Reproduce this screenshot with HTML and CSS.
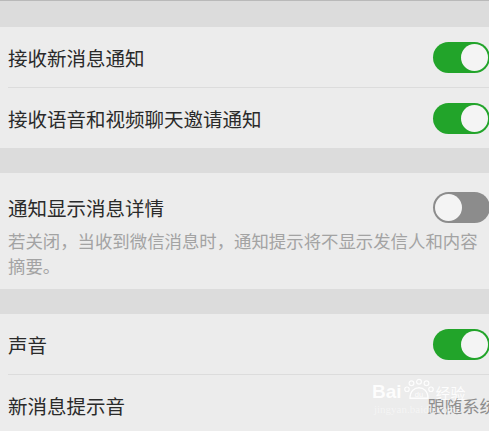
FILE: index.html
```html
<!DOCTYPE html>
<html lang="zh-CN">
<head>
  <meta charset="UTF-8" />
  <title>新消息通知</title>
  <link rel="stylesheet" href="styles.css">
</head>
<body>

<div class="band band-top"></div>

<div class="group">
  <div class="row">
    <span class="label">接收新消息通知</span>
    <span class="switch on"></span>
  </div>
  <div class="row">
    <span class="label">接收语音和视频聊天邀请通知</span>
    <span class="switch on"></span>
  </div>
</div>

<div class="band"></div>

<div class="group">
  <div class="row row-tall">
    <div class="row-head">
      <span class="label">通知显示消息详情</span>
      <span class="switch"></span>
    </div>
    <p class="hint">若关闭，当收到微信消息时，通知提示将不显示发信人和内容摘要。</p>
  </div>
</div>

<div class="band"></div>

<div class="group">
  <div class="row">
    <span class="label">声音</span>
    <span class="switch on"></span>
  </div>
  <div class="row">
    <span class="label">新消息提示音</span>
    <span class="value">跟随系统</span>
  </div>
</div>

<!-- watermark over the last row -->
<div class="watermark">
  <div class="wm-top">
    <span class="wm-bai">Bai</span>
    <svg class="wm-paw" viewBox="0 0 40 30">
      <circle cx="10" cy="6" r="3.2" fill="none" stroke="white" stroke-width="1.6"/>
      <circle cx="20" cy="4" r="3.2" fill="none" stroke="white" stroke-width="1.6"/>
      <circle cx="30" cy="6" r="3.2" fill="none" stroke="white" stroke-width="1.6"/>
      <circle cx="4" cy="14" r="3" fill="none" stroke="white" stroke-width="1.6"/>
      <circle cx="36" cy="14" r="3" fill="none" stroke="white" stroke-width="1.6"/>
      <path d="M8 26 C8 16 14 12 20 12 C26 12 32 16 32 26 Z" fill="none" stroke="white" stroke-width="1.8"/>
      <text x="20" y="24" text-anchor="middle" font-size="10" fill="white" font-family="Liberation Sans, sans-serif">du</text>
    </svg>
    <span class="wm-jy">经验</span>
  </div>
  <div class="wm-url">jingyan.baidu.com</div>
</div>

</body>
</html>
```

FILE: styles.css
```css
body {
  margin: 0;
  padding: 0;
  width: 489px;
  height: 431px;
  overflow: hidden;
  position: relative;
  background-color: #dcdcdc;
  font-family: "Noto Sans CJK SC", "Noto Sans", sans-serif;
  color: #2a2a2a;
}

.band {
  height: 25px;
  background-color: #dcdcdc;
}

.band-top {
  height: 26px;
  border-top: 1px solid #b9b9b9;
}

.group {
  background-color: #ececec;
}

.row {
  height: 60px;
  margin-left: 8px;
  display: flex;
  align-items: center;
  justify-content: space-between;
  border-bottom: 1px solid #dcdcdc;
}

.group .row:last-child {
  border-bottom: none;
}

.row-tall {
  height: 116px;
  display: block;
  padding-top: 18px;
  box-sizing: border-box;
}

.row-head {
  display: flex;
  align-items: center;
  justify-content: space-between;
  height: 32px;
}

.label {
  font-size: 19.5px;
  letter-spacing: 0;
}

.hint {
  margin: 5px 0 0;
  font-size: 17.4px;
  line-height: 25px;
  color: #a3a3a3;
}

.switch {
  width: 57px;
  height: 31px;
  margin-right: -1px;
  border-radius: 16px;
  background-color: #8c8c8c;
  position: relative;
  flex-shrink: 0;
}

.switch::after {
  content: "";
  position: absolute;
  top: 2px;
  left: 2px;
  width: 27px;
  height: 27px;
  border-radius: 50%;
  background-color: #f4f4f4;
}

.switch.on {
  background-color: #22a42a;
}

.switch.on::after {
  left: auto;
  right: 2px;
}

.value {
  font-size: 17.4px;
  color: #8e8e8e;
  margin-right: -8px;
  white-space: nowrap;
}

.watermark {
  position: absolute;
  left: 372px;
  top: 378px;
  color: #fff;
  opacity: 0.9;
}

.wm-top {
  display: flex;
  align-items: flex-end;
  gap: 2px;
}

.wm-bai {
  font-family: "Liberation Sans", sans-serif;
  font-size: 19px;
  font-weight: bold;
  line-height: 20px;
}

.wm-paw {
  width: 30px;
  height: 24px;
}

.wm-jy {
  font-size: 15px;
  line-height: 18px;
}

.wm-url {
  font-family: "Liberation Serif", serif;
  font-size: 11px;
  margin-top: 1px;
  margin-left: 2px;
  color: #f6f6f6;
}
```
